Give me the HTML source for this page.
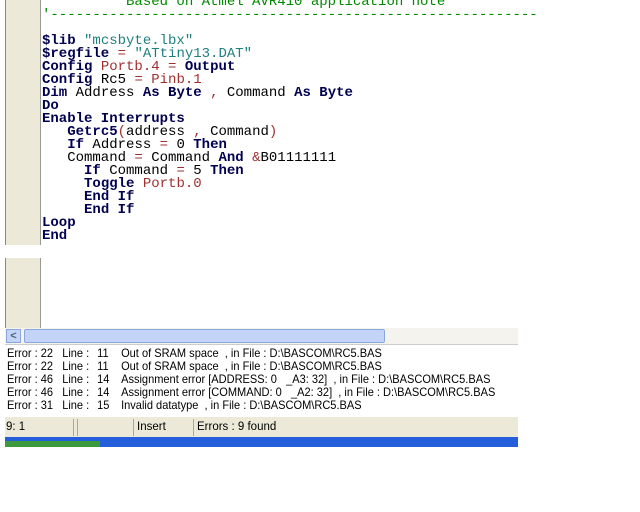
<!DOCTYPE html>
<html><head><style>
body{margin:0;width:640px;height:512px;background:#fff;position:relative;overflow:hidden;font-family:"Liberation Sans",sans-serif}
.gut{position:absolute;left:5px;width:36px;background:#ece9d8;border-left:1px solid #888;border-right:1px solid #999;box-sizing:border-box}
.code{position:absolute;left:42px;top:-4px;font-family:"Liberation Mono",monospace;font-size:14px;line-height:13px;white-space:pre;color:#000}
b{color:#000050}
.r{color:#a03030}.t{color:#208080}.g{color:#080}
.err{position:absolute;left:7px;top:347px;font-size:12px;line-height:13px;color:#000;white-space:pre;transform:scaleX(0.92);transform-origin:0 0}
.err span{display:inline-block}
</style></head><body>
<div class="gut" style="top:0;height:245px"></div>
<div class="gut" style="top:258px;height:70px"></div>
<div class="code"><span class="g">          Based on Atmel AVR410 application note</span>
<span class="g">'----------------------------------------------------------</span>

<b>$lib</b> <span class="t">"mcsbyte.lbx"</span>
<b>$regfile</b> <span class="r">=</span> <span class="t">"ATtiny13.DAT"</span>
<b>Config</b> <span class="r">Portb.4 =</span> <b>Output</b>
<b>Config</b> Rc5 <span class="r">=</span> <span class="r">Pinb.1</span>
<b>Dim</b> Address <b>As Byte</b> <span class="r">,</span> Command <b>As Byte</b>
<b>Do</b>
<b>Enable Interrupts</b>
   <b>Getrc5</b><span class="r">(</span>address <span class="r">,</span> Command<span class="r">)</span>
   <b>If</b> Address <span class="r">=</span> 0 <b>Then</b>
   Command <span class="r">=</span> Command <b>And</b> <span class="r">&amp;</span>B01111111
     <b>If</b> Command <span class="r">=</span> 5 <b>Then</b>
     <b>Toggle</b> <span class="r">Portb.0</span>
     <b>End If</b>
     <b>End If</b>
<b>Loop</b>
<b>End</b></div>
<div style="position:absolute;left:5px;top:328px;width:513px;height:16px;background:#f4f3ee;border-bottom:1px solid #ccc"></div>
<div style="position:absolute;left:6px;top:329px;width:15px;height:14px;background:#c3d4f7;border:1px solid #8aa6dc;box-sizing:border-box;font-size:11px;line-height:12px;text-align:center;color:#4d6185;font-weight:bold">&lt;</div>
<div style="position:absolute;left:24px;top:329px;width:361px;height:14px;background:#c3d4f7;border:1px solid #8aa6dc;box-sizing:border-box;border-radius:2px"></div>
<div class="err"><span style="width:60px">Error : 22</span><span style="width:38px">Line :</span><span style="width:26px">11</span>Out of SRAM space  , in File : D:\BASCOM\RC5.BAS
<span style="width:60px">Error : 22</span><span style="width:38px">Line :</span><span style="width:26px">11</span>Out of SRAM space  , in File : D:\BASCOM\RC5.BAS
<span style="width:60px">Error : 46</span><span style="width:38px">Line :</span><span style="width:26px">14</span>Assignment error [ADDRESS: 0   _A3: 32]  , in File : D:\BASCOM\RC5.BAS
<span style="width:60px">Error : 46</span><span style="width:38px">Line :</span><span style="width:26px">14</span>Assignment error [COMMAND: 0   _A2: 32]  , in File : D:\BASCOM\RC5.BAS
<span style="width:60px">Error : 31</span><span style="width:38px">Line :</span><span style="width:26px">15</span>Invalid datatype  , in File : D:\BASCOM\RC5.BAS</div>
<div style="position:absolute;left:5px;top:417px;width:513px;height:20px;background:#ece9d8;font-size:11.5px;line-height:21px">
<span style="position:absolute;left:1px">9: 1</span>
<span style="position:absolute;left:68px;top:2px;width:1px;height:17px;background:#aca899"></span>
<span style="position:absolute;left:72px;top:2px;width:1px;height:17px;background:#aca899"></span>
<span style="position:absolute;left:128px;top:2px;width:1px;height:17px;background:#aca899"></span>
<span style="position:absolute;left:132px">Insert</span>
<span style="position:absolute;left:188px;top:2px;width:1px;height:17px;background:#aca899"></span>
<span style="position:absolute;left:192px">Errors : 9 found</span></div>
<div style="position:absolute;left:5px;top:437px;width:513px;height:10px;background:#245edb"></div>
<div style="position:absolute;left:5px;top:441px;width:95px;height:6px;background:#3c9a3c"></div>
</body></html>
